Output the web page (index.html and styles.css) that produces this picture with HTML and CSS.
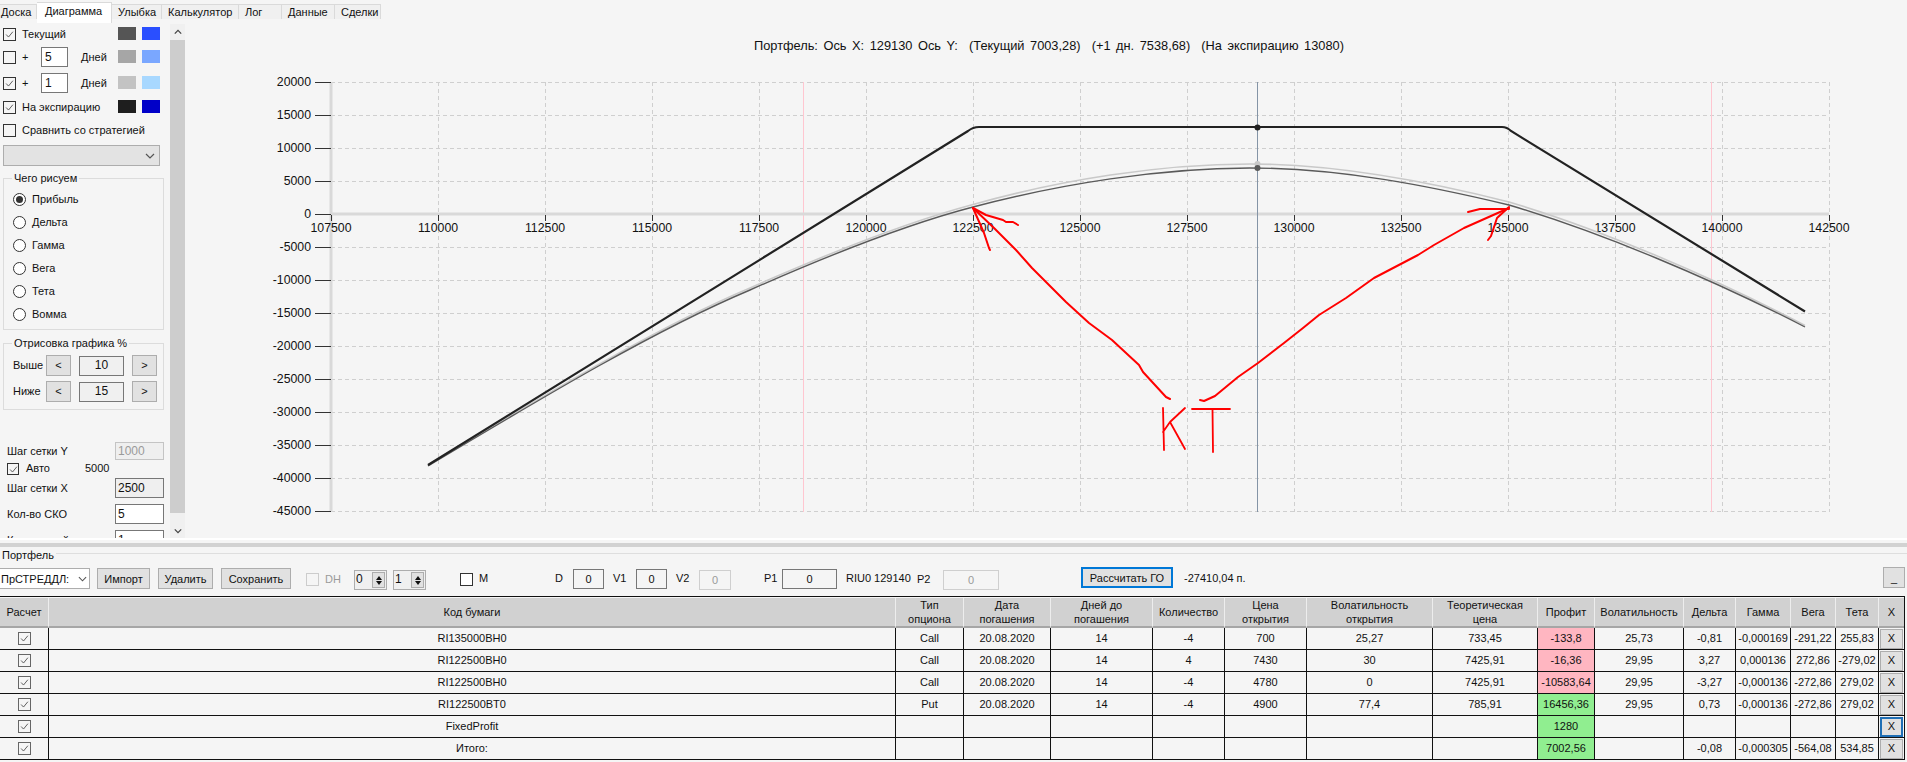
FILE: index.html
```html
<!DOCTYPE html>
<html lang="ru">
<head>
<meta charset="utf-8">
<title>Портфель</title>
<link rel="stylesheet" href="styles.css">
</head>
<body>
<svg class="sprite" aria-hidden="true">
  <symbol id="chk" viewBox="0 0 13 13"><path d="M2.5 6.5 5.3 9.5 10.5 3.2" fill="none" stroke="#555" stroke-width="1.1"/></symbol>
  <symbol id="chev-d" viewBox="0 0 10 6"><path d="M1 1 5 5 9 1" fill="none" stroke="#555" stroke-width="1.2"/></symbol>
  <symbol id="chev-u" viewBox="0 0 10 6"><path d="M1 5 5 1 9 5" fill="none" stroke="#444" stroke-width="1.6"/></symbol>
</svg>
<div class="app">
  <nav class="tabs">
    <div class="tab t1">Доска</div>
    <div class="tab t2 active">Диаграмма</div>
    <div class="tab t3">Улыбка</div>
    <div class="tab t4">Калькулятор</div>
    <div class="tab t5">Лог</div>
    <div class="tab t6">Данные</div>
    <div class="tab t7">Сделки</div>
  </nav>

  <section class="top">
    <aside class="side">
      <div class="row">
        <span class="cb"><svg><use href="#chk"/></svg></span><span class="lbl">Текущий</span>
        <span class="swatches"><i class="sw s1"></i><i class="sw s2"></i></span>
      </div>
      <div class="row m3">
        <span class="cb"></span><span class="plus">+</span><span class="days">5</span><span class="dn">Дней</span>
        <span class="swatches"><i class="sw s3"></i><i class="sw s4"></i></span>
      </div>
      <div class="row m6">
        <span class="cb"><svg><use href="#chk"/></svg></span><span class="plus">+</span><span class="days">1</span><span class="dn">Дней</span>
        <span class="swatches"><i class="sw s5"></i><i class="sw s6"></i></span>
      </div>
      <div class="row m4">
        <span class="cb"><svg><use href="#chk"/></svg></span><span class="lbl">На экспирацию</span>
        <span class="swatches"><i class="sw s7"></i><i class="sw s8"></i></span>
      </div>
      <div class="row m3">
        <span class="cb"></span><span class="lbl">Сравнить со стратегией</span>
      </div>
      <div class="side-combo"><svg class="chev"><use href="#chev-d"/></svg></div>

      <div class="group g1">
        <span class="legend">Чего рисуем</span>
        <div class="radio"><span class="rd on"></span>Прибыль</div>
        <div class="radio"><span class="rd"></span>Дельта</div>
        <div class="radio"><span class="rd"></span>Гамма</div>
        <div class="radio"><span class="rd"></span>Вега</div>
        <div class="radio"><span class="rd"></span>Тета</div>
        <div class="radio"><span class="rd"></span>Вомма</div>
      </div>

      <div class="group g2">
        <span class="legend">Отрисовка графика %</span>
        <div class="pct"><span class="pct-l">Выше</span><span class="btn pct-b">&lt;</span><span class="pct-v">10</span><span class="btn pct-b">&gt;</span></div>
        <div class="pct"><span class="pct-l">Ниже</span><span class="btn pct-b">&lt;</span><span class="pct-v">15</span><span class="btn pct-b">&gt;</span></div>
      </div>

      <div class="field f-y"><span class="f-l">Шаг сетки Y</span><span class="f-in dis">1000</span></div>
      <div class="auto"><span class="cb cb-s"><svg><use href="#chk"/></svg></span><span class="auto-l">Авто</span><span>5000</span></div>
      <div class="field f-x"><span class="f-l">Шаг сетки X</span><span class="f-in ro">2500</span></div>
      <div class="field f-n"><span class="f-l">Кол-во СКО</span><span class="f-in">5</span></div>
      <div class="field f-n"><span class="f-l">Кол-во дней</span><span class="f-in">1</span></div>
    </aside>
    <div class="scroll">
      <div class="sc-btn"><svg class="sc-chev"><use href="#chev-u"/></svg></div>
      <div class="sc-thumb"></div>
      <div class="sc-btn sc-end"><svg class="sc-chev"><use href="#chev-u"/></svg></div>
    </div>

    <svg class="chart" viewBox="185 24 1722 514">
      <text class="title" x="1049" y="50" text-anchor="middle" xml:space="preserve">Портфель: Ось X: 129130 Ось Y:  (Текущий 7003,28)  (+1 дн. 7538,68)  (На экспирацию 13080)</text>

      <path class="grid" d="M331 82.5H1829M331 115.5H1829M331 148.5H1829M331 181.5H1829M331 247.5H1829M331 280.5H1829M331 313.5H1829M331 346.5H1829M331 379.5H1829M331 412.5H1829M331 445.5H1829M331 478.5H1829M331 511.5H1829"/>
      <path class="grid" d="M438.5 82V512M545.5 82V512M652.5 82V512M759.5 82V512M866.5 82V512M973.5 82V512M1080.5 82V512M1187.5 82V512M1294.5 82V512M1401.5 82V512M1508.5 82V512M1615.5 82V512M1722.5 82V512M1829.5 82V512"/>
      <path class="pink" d="M803.5 82V512M1711.5 82V512"/>
      <path class="axis" d="M331 82V512M331 214H1829"/>

      <path class="tick" d="M315 82.5H331M315 115.5H331M315 148.5H331M315 181.5H331M315 214.5H331M315 247.5H331M315 280.5H331M315 313.5H331M315 346.5H331M315 379.5H331M315 412.5H331M315 445.5H331M315 478.5H331M315 511.5H331"/>
      <path class="tick" d="M331.5 215V221M438.5 215V221M545.5 215V221M652.5 215V221M759.5 215V221M866.5 215V221M973.5 215V221M1080.5 215V221M1187.5 215V221M1294.5 215V221M1401.5 215V221M1508.5 215V221M1615.5 215V221M1722.5 215V221M1829.5 215V221"/>

      <g class="ylab">
        <text x="311" y="86">20000</text><text x="311" y="119">15000</text><text x="311" y="152">10000</text>
        <text x="311" y="185">5000</text><text x="311" y="218">0</text><text x="311" y="251">-5000</text>
        <text x="311" y="284">-10000</text><text x="311" y="317">-15000</text><text x="311" y="350">-20000</text>
        <text x="311" y="383">-25000</text><text x="311" y="416">-30000</text><text x="311" y="449">-35000</text>
        <text x="311" y="482">-40000</text><text x="311" y="515">-45000</text>
      </g>
      <g class="xlab">
        <text x="331" y="232">107500</text><text x="438" y="232">110000</text><text x="545" y="232">112500</text>
        <text x="652" y="232">115000</text><text x="759" y="232">117500</text><text x="866" y="232">120000</text>
        <text x="973" y="232">122500</text><text x="1080" y="232">125000</text><text x="1187" y="232">127500</text>
        <text x="1294" y="232">130000</text><text x="1401" y="232">132500</text><text x="1508" y="232">135000</text>
        <text x="1615" y="232">137500</text><text x="1722" y="232">140000</text><text x="1829" y="232">142500</text>
      </g>

      <path class="cursor" d="M1257.5 82V512"/>
      <path class="c-light" d="M428 465 C545 395 655 328 750 288 C820 257 900 224 973 204.5 C1060 180 1160 164 1250 164 C1340 164 1430 182 1509 202 C1600 229 1710 276 1805 325.5"/>
      <path class="c-dark" d="M428 466 C545 396 655 330 750 290 C820 259 900 226 973 207 C1060 184 1160 168 1250 168 C1340 168 1430 186 1509 205 C1600 232 1710 278 1805 327"/>
      <path class="c-exp" d="M428 465 968 131 Q973 127 979 127 H1502 Q1507 127 1511 131 L1805 311.5"/>
      <circle class="dot-exp" cx="1257.5" cy="127.5" r="3"/>
      <circle class="dot-light" cx="1257.5" cy="164" r="3"/>
      <circle class="dot-dark" cx="1257.5" cy="168" r="3"/>

      <g class="red">
        <path d="M973 208 994 228 1016 250 1032 268 1051 287 1066 302 1089 323 1112 340 1139 365 1143 372 1166 397 1170 399"/>
        <path d="M973 208 984 233 989 248 990 250"/>
        <path d="M973 208 986 215 1003 220 1006 222 1013 222 1018 225"/>
        <path d="M1200 400 1204 401 1215 396 1238 377 1258 363 1284 343 1303 328 1319 315 1346 298 1374 278 1418 255 1434 245 1464 228 1509 208"/>
        <path d="M1468 212 1480 209 1509 209"/>
        <path d="M1488 240 1491 236 1497 218 1509 207"/>
        <path class="thin" d="M1163 408 1164 450M1185 408 1170 422 1163 432M1170 422 1185 449M1192 409H1230M1212.5 409 1213 452"/>
      </g>
    </svg>
  </section>

  <div class="split"></div>

  <section class="port">
    <div class="port-head"><span class="port-title">Портфель</span><span class="port-line"></span></div>
    <div class="toolbar">
      <span class="combo">ПрСТРЕДДЛ:<svg class="chev"><use href="#chev-d"/></svg></span>
      <span class="btn b-imp">Импорт</span>
      <span class="btn b-del">Удалить</span>
      <span class="btn b-save">Сохранить</span>
      <span class="cb cb-dis x-dh"></span><span class="t-dis l-dh">DH</span>
      <span class="spin x-s1"><span class="spin-v">0</span><span class="spin-b"><i class="up"></i><i class="dn-a"></i></span></span>
      <span class="spin x-s2"><span class="spin-v">1</span><span class="spin-b"><i class="up"></i><i class="dn-a"></i></span></span>
      <span class="cb x-m"></span><span class="l-m">M</span>
      <span class="l-d">D</span><span class="in x-d">0</span>
      <span class="l-v1">V1</span><span class="in x-v1">0</span>
      <span class="l-v2">V2</span><span class="in dis x-v2">0</span>
      <span class="l-p1">P1</span><span class="in x-p1">0</span>
      <span class="l-riu">RIU0 129140</span><span class="l-p2">P2</span><span class="in dis x-p2">0</span>
      <span class="btn b-go">Рассчитать ГО</span>
      <span class="l-val">-27410,04 п.</span>
      <span class="btn b-min">_</span>
    </div>
    <div class="table-wrap">
      <table class="grid-t">
        <colgroup>
          <col class="w49"><col class="w847"><col class="w68"><col class="w87"><col class="w102"><col class="w72"><col class="w82"><col class="w126"><col class="w105"><col class="w57"><col class="w89"><col class="w52"><col class="w55"><col class="w45"><col class="w43"><col class="w26">
        </colgroup>
        <thead>
          <tr><th>Расчет</th><th>Код бумаги</th><th>Тип<br>опциона</th><th>Дата<br>погашения</th><th>Дней до<br>погашения</th><th>Количество</th><th>Цена<br>открытия</th><th>Волатильность<br>открытия</th><th>Теоретическая<br>цена</th><th>Профит</th><th>Волатильность</th><th>Дельта</th><th>Гамма</th><th>Вега</th><th>Тета</th><th>X</th></tr>
        </thead>
        <tbody>
          <tr><td><span class="cb cb-t"><svg><use href="#chk"/></svg></span></td><td>RI135000BH0</td><td>Call</td><td>20.08.2020</td><td>14</td><td>-4</td><td>700</td><td>25,27</td><td>733,45</td><td class="loss">-133,8</td><td>25,73</td><td>-0,81</td><td>-0,000169</td><td>-291,22</td><td>255,83</td><td><span class="btn x-btn">X</span></td></tr>
          <tr><td><span class="cb cb-t"><svg><use href="#chk"/></svg></span></td><td>RI122500BH0</td><td>Call</td><td>20.08.2020</td><td>14</td><td>4</td><td>7430</td><td>30</td><td>7425,91</td><td class="loss">-16,36</td><td>29,95</td><td>3,27</td><td>0,000136</td><td>272,86</td><td>-279,02</td><td><span class="btn x-btn">X</span></td></tr>
          <tr><td><span class="cb cb-t"><svg><use href="#chk"/></svg></span></td><td>RI122500BH0</td><td>Call</td><td>20.08.2020</td><td>14</td><td>-4</td><td>4780</td><td>0</td><td>7425,91</td><td class="loss">-10583,64</td><td>29,95</td><td>-3,27</td><td>-0,000136</td><td>-272,86</td><td>279,02</td><td><span class="btn x-btn">X</span></td></tr>
          <tr><td><span class="cb cb-t"><svg><use href="#chk"/></svg></span></td><td>RI122500BT0</td><td>Put</td><td>20.08.2020</td><td>14</td><td>-4</td><td>4900</td><td>77,4</td><td>785,91</td><td class="gain">16456,36</td><td>29,95</td><td>0,73</td><td>-0,000136</td><td>-272,86</td><td>279,02</td><td><span class="btn x-btn">X</span></td></tr>
          <tr><td><span class="cb cb-t"><svg><use href="#chk"/></svg></span></td><td>FixedProfit</td><td></td><td></td><td></td><td></td><td></td><td></td><td></td><td class="gain">1280</td><td></td><td></td><td></td><td></td><td></td><td><span class="btn x-btn focus">X</span></td></tr>
          <tr><td><span class="cb cb-t"><svg><use href="#chk"/></svg></span></td><td>Итого:</td><td></td><td></td><td></td><td></td><td></td><td></td><td></td><td class="gain">7002,56</td><td></td><td>-0,08</td><td>-0,000305</td><td>-564,08</td><td>534,85</td><td><span class="btn x-btn">X</span></td></tr>
        </tbody>
      </table>
    </div>
  </section>
</div>
</body>
</html>
```
FILE: styles.css
```css
* { box-sizing: border-box; }
html, body { margin: 0; height: 100%; }
body {
  background: #f5f5f5;
  color: #111;
  font: 11px/13px "Liberation Sans", Arial, sans-serif;
  overflow: hidden;
}
.sprite { position: absolute; width: 0; height: 0; }
.app { display: flex; flex-direction: column; width: 1907px; height: 762px; }

/* tabs */
.tabs { display: flex; height: 24px; padding-top: 2px; align-items: flex-start; }
.tab {
  height: 15px; margin-top: 2px; padding-left: 6px; background: #f0f0f0;
  border: 1px solid #dadada; border-left: 0; border-bottom: 0;
  line-height: 15px; white-space: nowrap;
}
.tab.active { height: 21px; margin-top: 0; padding-left: 8px; background: #fff; line-height: 16px; }
.t1 { width: 37px; padding-left: 1px; } .t2 { width: 75px; } .t3 { width: 50px; } .t4 { width: 77px; }
.t5 { width: 43px; } .t6 { width: 53px; } .t7 { width: 46px; }

/* left panel */
.top { display: flex; height: 514px; }
.side { width: 170px; height: 514px; overflow: hidden; padding-left: 3px; }
.row { display: flex; align-items: center; height: 20px; position: relative; }
.m3 { margin-top: 3px; } .m4 { margin-top: 4px; } .m6 { margin-top: 6px; }
.cb { display: block; flex: none; width: 13px; height: 13px; border: 1px solid #333; background: #fff; }
.row .cb { background: transparent; }
.cb svg { display: block; width: 11px; height: 11px; }
.lbl { margin-left: 6px; }
.plus { margin-left: 6px; width: 19px; }
.days { width: 27px; height: 20px; border: 1px solid #777; background: #fff; padding: 3px 0 0 3px; font-size: 12px; }
.dn { margin-left: 13px; }
.swatches { position: absolute; left: 115px; top: 3px; display: flex; gap: 6px; }
.sw { display: block; width: 18px; height: 13px; }
.s1 { background: #555; } .s2 { background: #2a4fff; }
.s3 { background: #a6a6a6; } .s4 { background: #7aa7ff; }
.s5 { background: #c3c3c3; } .s6 { background: #a8d8ff; }
.s7 { background: #1e1e1e; } .s8 { background: #0000c8; }
.side-combo {
  display: flex; align-items: center; justify-content: flex-end;
  width: 157px; height: 21px; margin-top: 5px; padding-right: 4px;
  background: #e3e3e3; border: 1px solid #adadad;
}
.chev { display: block; width: 10px; height: 6px; flex: none; }
.group { position: relative; width: 161px; border: 1px solid #dcdcdc; }
.legend { position: absolute; left: 8px; top: -7px; padding: 0 2px; background: #f5f5f5; white-space: nowrap; }
.g1 { height: 152px; margin-top: 12px; padding-top: 9px; }
.radio { display: flex; align-items: center; height: 23px; padding-left: 9px; }
.rd { position: relative; width: 13px; height: 13px; margin-right: 6px; border: 1px solid #333; border-radius: 50%; background: #fff; }
.rd.on::after { content: ""; position: absolute; left: 2px; top: 2px; width: 7px; height: 7px; border-radius: 50%; background: #333; }
.g2 { height: 67px; margin-top: 13px; padding: 11px 0 0 9px; }
.pct { display: flex; align-items: center; height: 21px; margin-bottom: 5px; }
.pct-l { width: 33px; }
.btn {
  display: flex; align-items: center; justify-content: center; flex: none;
  background: #e1e1e1; border: 1px solid #adadad; white-space: nowrap;
}
.pct-b { width: 25px; height: 21px; }
.pct-v {
  display: flex; align-items: center; justify-content: center;
  width: 45px; height: 20px; margin: 0 8px 0 8px; border: 1px solid #777; background: #f0f0f0; font-size: 12px;
}
.field { display: flex; align-items: center; width: 161px; height: 20px; padding-left: 4px; }
.f-l { flex: 1; }
.f-in { width: 49px; height: 100%; border: 1px solid #777; background: #fff; padding: 3px 0 0 2px; font-size: 12px; }
.f-in.dis { background: #efefef; border-color: #c4c4c4; color: #9a9a9a; }
.f-in.ro { background: #efefef; }
.f-y { height: 18px; margin-top: 32px; }
.f-y .f-in { padding-top: 2px; }
.auto { display: flex; align-items: center; height: 13px; margin-top: 2px; padding-left: 4px; }
.cb-s { width: 12px; height: 12px; background: transparent; }
.auto-l { width: 59px; margin-left: 7px; }
.f-x { margin-top: 3px; }
.f-n { margin-top: 6px; }

/* scrollbar */
.scroll { display: flex; flex-direction: column; flex: none; width: 15px; height: 514px; background: #f0f0f0; }
.sc-btn { display: flex; justify-content: center; height: 16px; padding-top: 5px; }
.sc-thumb { height: 473px; background: #cdcdcd; }
.sc-end { height: 25px; padding-top: 15px; }
.sc-end .sc-chev { transform: scaleY(-1); }
.sc-chev { display: block; width: 8px; height: 6px; }

/* chart */
.chart { display: block; flex: none; width: 1722px; height: 514px; }
.chart text { font-family: "Liberation Sans", Arial, sans-serif; fill: #111; }
.title { font-size: 12.8px; word-spacing: 2px; white-space: pre; }
.ylab text { font-size: 12.3px; text-anchor: end; }
.xlab text { font-size: 12.3px; text-anchor: middle; }
.grid { fill: none; stroke: #cfcfcf; stroke-dasharray: 4 3; }
.pink { fill: none; stroke: #ffc6d0; }
.axis { fill: none; stroke: #d9d9d9; stroke-width: 3; }
.tick { fill: none; stroke: #333; }
.cursor { fill: none; stroke: #8494a6; }
.c-light { fill: none; stroke: #c9c9c9; stroke-width: 1.6; }
.c-dark { fill: none; stroke: #5a5a5a; stroke-width: 1.4; }
.c-exp { fill: none; stroke: #222; stroke-width: 2.2; }
.dot-exp { fill: #222; }
.dot-light { fill: #c9c9c9; }
.dot-dark { fill: #5a5a5a; }
.red path { fill: none; stroke: #f00; stroke-width: 2; stroke-linejoin: round; stroke-linecap: round; }
.red .thin { stroke-width: 1.8; }

/* splitter */
.split { flex: none; height: 10px; border-top: 2px solid #fff; border-bottom: 1px solid #f5f5f5; background: linear-gradient(#f5f5f5 0 3px, #d2d2d2 3px 7px, #f5f5f5 7px); }

/* portfolio */
.port { flex: 1; min-height: 0; }
.port-head { display: flex; align-items: center; height: 14px; padding-left: 2px; }
.port-title { margin-right: 2px; }
.port-line { flex: 1; height: 1px; margin-top: -3px; background: #dedede; }
.toolbar { display: flex; align-items: flex-start; height: 34px; padding-top: 5px; }
.toolbar > span { flex: none; line-height: 20px; white-space: nowrap; }
.combo {
  display: flex; align-items: center; width: 90px; height: 21px; margin-top: 1px;
  border: 1px solid #adadad; border-left: 0; background: #fff; padding-left: 1px; overflow: hidden;
}
.combo .chev { margin-left: 9px; width: 9px; }
.toolbar .btn { height: 21px; margin-top: 1px; }
.toolbar .b-imp { width: 53px; margin-left: 7px; }
.toolbar .b-del { width: 55px; margin-left: 8px; }
.toolbar .b-save { width: 70px; margin-left: 8px; }
.x-dh { margin: 6px 0 0 15px; }
.cb-dis { background: #f5f5f5; border-color: #ccc; }
.toolbar .t-dis { color: #9a9a9a; }
.l-dh { width: 29px; margin: 2px 0 0 6px; }
.spin {
  display: flex; width: 33px; height: 20px; margin-top: 3px; border: 1px solid #adadad; background: #f0f0f0;
}
.x-s1 { margin-left: 0; }
.x-s2 { margin-left: 6px; }
.spin-v { flex: 1; padding-left: 1px; line-height: 17px; font-size: 12px; }
.spin-b { display: flex; flex-direction: column; justify-content: center; gap: 1px; width: 13px; margin: 1px; background: #e1e1e1; border: 1px solid #adadad; }
.spin-b i { display: block; width: 0; height: 0; margin: 0 auto; border-left: 3px solid transparent; border-right: 3px solid transparent; }
.spin-b .up { border-bottom: 4px solid #111; }
.spin-b .dn-a { border-top: 4px solid #111; }
.x-m { margin: 6px 0 0 34px; background: #fff; }
.l-m { width: 76px; margin: 1px 0 0 6px; }
.l-d { width: 18px; margin-top: 1px; }
.in {
  display: flex; align-items: center; justify-content: center; height: 20px; margin-top: 2px;
  border: 1px solid #777; background: #f5f5f5;
}
.in.dis { border-color: #cfcfcf; color: #9a9a9a; margin-top: 3px; }
.x-d { width: 31px; }
.l-v1 { width: 23px; margin: 1px 0 0 9px; }
.x-v1 { width: 31px; }
.l-v2 { width: 23px; margin: 1px 0 0 9px; }
.x-v2 { width: 32px; }
.l-p1 { width: 18px; margin: 1px 0 0 33px; }
.x-p1 { width: 55px; }
.l-riu { width: 71px; margin: 1px 0 0 9px; }
.l-p2 { width: 26px; margin-top: 2px; }
.x-p2 { width: 56px; }
.toolbar .b-go { width: 92px; height: 21px; margin: 0 0 0 82px; border: 2px solid #0078d7; }
.l-val { width: 699px; margin: 1px 0 0 11px; }
.toolbar .b-min { width: 22px; height: 21px; margin-top: 0; align-items: flex-end; line-height: 13px; padding-bottom: 2px; }

/* table */
.table-wrap { width: 1905px; border-top: 1px solid #111; border-right: 1px solid #111; padding-top: 1px; }
.grid-t { table-layout: fixed; width: 1904px; border-collapse: separate; border-spacing: 0; }
.grid-t th {
  height: 30px; padding: 0; background: #d1d1d1; font-weight: normal; line-height: 14px;
  border-right: 1px solid #ededed; border-bottom: 2px solid #a6a6a6;
}
.grid-t td {
  height: 22px; padding: 0; text-align: center; white-space: nowrap;
  border-right: 1px solid #111; border-bottom: 1px solid #111;
}
.grid-t th:last-child, .grid-t td:last-child { border-right: 0; }
.cb-t { margin: 0 auto; border-color: #666; background: transparent; }
.loss { background: #ffb6c1; }
.gain { background: #90ee90; }
.x-btn { width: 23px; height: 20px; margin: 0 auto; }
.x-btn.focus { border: 2px solid #1f6fb5; }
.w49 { width: 49px; } .w847 { width: 847px; } .w68 { width: 68px; } .w87 { width: 87px; }
.w102 { width: 102px; } .w72 { width: 72px; } .w82 { width: 82px; } .w126 { width: 126px; }
.w105 { width: 105px; } .w57 { width: 57px; } .w89 { width: 89px; } .w52 { width: 52px; }
.w55 { width: 55px; } .w45 { width: 45px; } .w43 { width: 43px; } .w26 { width: 25px; }
```
